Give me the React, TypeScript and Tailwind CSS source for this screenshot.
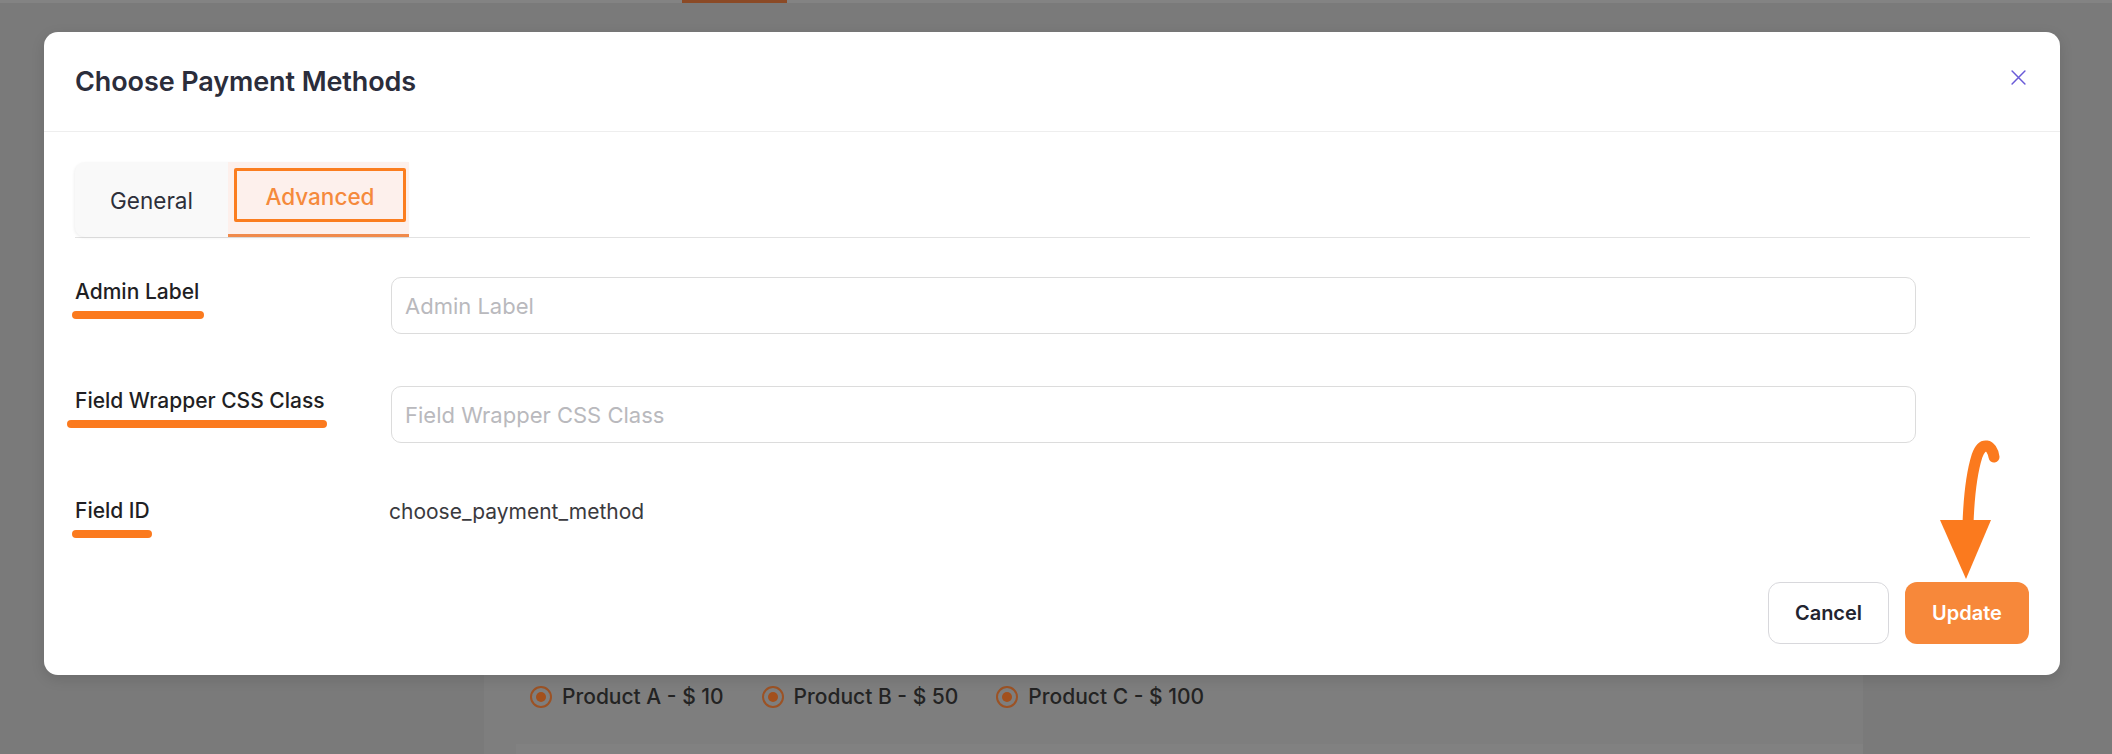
import React from 'react'

const font = { fontFamily: 'Inter, "Noto Sans", sans-serif' }

const products = ['Product A - $ 10', 'Product B - $ 50', 'Product C - $ 100']

// backdrop page, already dimmed by the overlay
const BehindPage = () => (
  <div className="flex flex-col h-full">
    <div className="h-[3px] bg-[#838383] flex">
      <div className="ml-[682px] w-[105px] h-[3px] bg-[#8b4a26]" />
    </div>
    <div className="flex-1 flex">
      <div className="ml-[484px] w-[1379px] mt-[640px] bg-[#7e7e7e] flex flex-col">
        <div className="flex items-center gap-[38px] pl-[46px] pt-[38px]">
          {products.map((p) => (
            <div key={p} className="flex items-center gap-[10px]">
              <span className="w-[22px] h-[22px] rounded-full border-2 border-[#9c5224] flex items-center justify-center">
                <span className="w-[10px] h-[10px] rounded-full bg-[#a3501c]" />
              </span>
              <span className="text-[21px] font-medium text-[#232323]">{p}</span>
            </div>
          ))}
        </div>
        <div className="ml-[32px] mt-[31px] flex-1 bg-[#818181]" />
      </div>
    </div>
  </div>
)

const Underline = ({ w, ml }: { w: number; ml: number }) => (
  <div className="h-[8px] rounded-full bg-[#fb7a1e] mt-[5px]" style={{ width: w, marginLeft: ml }} />
)

const App = () => {
  return (
    <div className="relative w-[2112px] h-[754px] overflow-hidden bg-[#7a7a7a]" style={font}>
      <BehindPage />

      <div className="absolute left-[44px] top-[32px] w-[2016px] h-[643px] bg-white rounded-[14px] shadow-[0_4px_14px_rgba(0,0,0,0.12)] flex flex-col">
        {/* header */}
        <div className="h-[100px] shrink-0 border-b border-[#eeeeee] flex items-center justify-between pl-[31px] pr-[32px]">
          <h2 className="text-[27px] font-semibold text-[#2b2d3b] tracking-[-0.1px] pt-[1px]">Choose Payment Methods</h2>
          <button type="button" className="w-[20px] h-[20px] flex items-center justify-center -mt-[8px]">
            <svg className="w-[15px] h-[15px]" viewBox="0 0 14 14" fill="none">
              <path d="M1 1l12 12M13 1L1 13" stroke="#6a5bd8" strokeWidth="1.4" strokeLinecap="round" />
            </svg>
          </button>
        </div>

        {/* body */}
        <div className="flex-1 flex flex-col px-[31px] pt-[30px] pb-[31px]">
          <div className="border-b border-[#e2e2e2] mr-[-1px]">
            <div className="inline-flex bg-[#f9f9f9] rounded-l-[10px] shadow-[-1px_1px_3px_rgba(0,0,0,0.06)]">
              <div className="h-[75px] w-[153px] flex items-center justify-center text-[22.5px] text-[#2d2f3a] pt-[2px]">General</div>
              <div className="h-[75px] w-[181px] bg-[#fdf0ec] border-b-[3px] border-[#f08a4b] pl-[6px] pr-[3px] pt-[6px]">
                <div className="h-[54px] border-[3.5px] border-[#fb7d1f] rounded-[2px] flex items-center justify-center text-[22.5px] font-medium text-[#f58a3c] pt-[3px]">
                  Advanced
                </div>
              </div>
            </div>
          </div>

          <div className="flex flex-col mt-[39px]">
            <div className="flex items-start">
              <div className="w-[316px] pt-[1px]">
                <div className="text-[21px] font-medium text-[#1f1f24] leading-[28px]">Admin Label</div>
                <Underline w={132} ml={-3} />
              </div>
              <input
                className="w-[1525px] h-[57px] rounded-[10px] border border-[#dcdcdc] px-[13px] text-[22px] outline-none placeholder:text-[#b9b9bd]"
                placeholder="Admin Label"
                style={font}
              />
            </div>

            <div className="flex items-start mt-[52px]">
              <div className="w-[316px] pt-[1px]">
                <div className="text-[21px] font-medium text-[#1f1f24] leading-[28px]">Field Wrapper CSS Class</div>
                <Underline w={260} ml={-8} />
              </div>
              <input
                className="w-[1525px] h-[57px] rounded-[10px] border border-[#dcdcdc] px-[13px] text-[22px] outline-none placeholder:text-[#b9b9bd]"
                placeholder="Field Wrapper CSS Class"
                style={font}
              />
            </div>

            <div className="flex items-start mt-[54px]">
              <div className="w-[314px]">
                <div className="text-[21px] font-medium text-[#1f1f24] leading-[28px]">Field ID</div>
                <Underline w={80} ml={-3} />
              </div>
              <div className="text-[21px] text-[#3a3a3e] leading-[28px] pt-[1px]">choose_payment_method</div>
            </div>
          </div>

          <div className="mt-auto flex justify-end gap-[16px]">
            <button type="button" className="w-[121px] h-[62px] rounded-[12px] border border-[#d8d8dc] bg-white text-[20px] font-semibold text-[#23242f]">
              Cancel
            </button>
            <button type="button" className="w-[124px] h-[62px] rounded-[12px] bg-[#f7883a] text-[20px] font-semibold text-white">
              Update
            </button>
          </div>
        </div>
      </div>

      {/* annotation arrow */}
      <svg className="absolute left-[1930px] top-[435px] w-[80px] h-[150px]" viewBox="1930 435 80 150" fill="none">
        <path d="M1994 457 C1992 444 1982 441 1977 456 C1972 472 1969 495 1968 524" stroke="#fb7a1e" strokeWidth="11" strokeLinecap="round" />
        <path d="M1940 520 L1991 520 L1966 579 Z" fill="#fb7a1e" />
      </svg>
    </div>
  )
}

export default App
